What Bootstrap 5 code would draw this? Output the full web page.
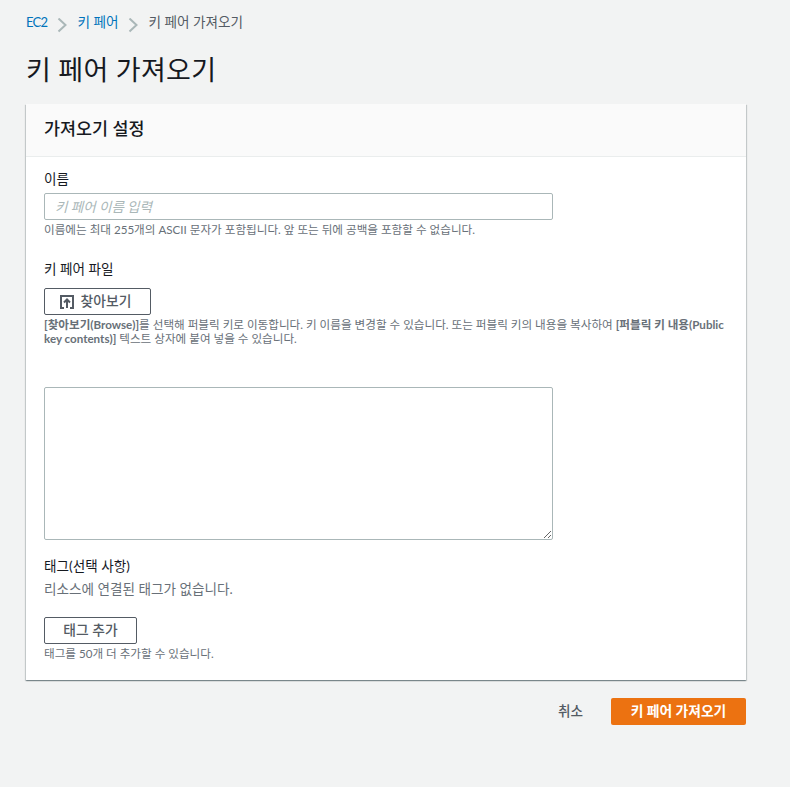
<!DOCTYPE html>
<html lang="ko">

<head>
    <meta charset="UTF-8">
    <meta name="viewport" content="width=device-width, initial-scale=1.0">
    <title>키 페어 가져오기</title>
    <link href="https://cdn.jsdelivr.net/npm/bootstrap@5.3.0/dist/css/bootstrap.min.css" rel="stylesheet">
    <style>
        body {
            background-color: #f2f3f3;
            font-family: "Lato", "Noto Sans CJK KR", sans-serif;
            font-size: 13.6px;
            color: #16191f;
            padding: 12px 44px 0 26px;
        }

        .crumbs {
            height: 21px;
            line-height: 21px;
            font-size: 13.6px;
            color: #545b64;
        }

        .crumbs a {
            color: #0073bb;
            text-decoration: none;
        }

        .crumbs .crumb-latin {
            font-size: 13px;
            letter-spacing: -.7px;
        }

        .crumbs svg {
            margin: 6px 10px 0 10px;
        }

        .page-head {
            font-size: 27px;
            font-weight: 400;
            line-height: 36px;
            letter-spacing: .3px;
            margin: 19px 0 16px;
        }

        .import-card {
            border: 0;
            border-radius: 0;
            background: #fff;
            box-shadow: 0 1px 1px 0 rgba(0, 28, 36, .3), 1px 1px 1px 0 rgba(0, 28, 36, .15), -1px 1px 1px 0 rgba(0, 28, 36, .15);
        }

        .import-card .card-header {
            height: 53px;
            padding: 0 18px;
            line-height: 50px;
            background: #fafafa;
            border-bottom: 1px solid #eaeded;
            border-radius: 0;
            font-size: 17.4px;
            font-weight: 500;
        }

        .import-card .card-body {
            padding: 12px 18px 19px;
        }

        .field-label {
            font-size: 13.6px;
            line-height: 20px;
            margin: 0 0 4px;
        }

        .field-box {
            display: block;
            width: 509px;
            border: 1px solid #aab7b8;
            border-radius: 2px;
            background: #fff;
            padding: 0 10px;
            font-size: 13.6px;
            color: #16191f;
        }

        input.field-box {
            height: 27px;
        }

        input.field-box::placeholder {
            color: #aab7b8;
            font-style: italic;
            opacity: 1;
        }

        textarea.field-box {
            height: 153px;
            resize: both;
            margin-top: 41px;
        }

        .hint {
            font-size: 11.6px;
            line-height: 14px;
            color: #687078;
        }

        .hint b {
            font-weight: 700;
        }

        .btn-line {
            display: flex;
            align-items: center;
            justify-content: center;
            height: 27px;
            padding: 0;
            border: 1px solid #545b64;
            border-radius: 2px;
            background: #fff;
            color: #545b64;
            font-size: 13.8px;
            font-weight: 500;
        }

        .btn-browse {
            width: 107px;
            gap: 7px;
            padding-right: 4px;
        }

        .btn-tag {
            width: 93px;
        }

        .muted-line {
            font-size: 13.6px;
            line-height: 20px;
            color: #687078;
            margin-top: 3px;
        }

        .btn-cancel {
            color: #545b64;
            font-size: 13.6px;
            font-weight: 500;
            padding: 0;
            border: 0;
            margin-right: 28px;
        }

        .btn-orange {
            width: 135px;
            height: 27px;
            padding: 0;
            border: 0;
            border-radius: 2px;
            background: #ec7211;
            color: #fff;
            font-size: 13.8px;
            font-weight: 700;
        }

        .gap-file {
            margin-top: 22px;
        }

        .gap-browse {
            margin-top: 9px;
        }

        .gap-tags {
            margin-top: 16px;
        }

        .gap-tag-btn {
            margin-top: 18px;
        }

        .hint-tight {
            margin-top: 3px;
        }

        .page-foot {
            margin-top: 18px;
        }
    </style>
</head>

<body>
    <nav class="crumbs d-flex align-items-start">
        <a class="crumb-latin" href="#">EC2</a>
        <svg width="10" height="15" viewBox="0 0 10 15" fill="none" stroke="#aab7b8" stroke-width="2"><path d="M1.5 .5 8.5 7 1.5 13.5"/></svg>
        <a href="#">키 페어</a>
        <svg width="10" height="15" viewBox="0 0 10 15" fill="none" stroke="#aab7b8" stroke-width="2"><path d="M1.5 .5 8.5 7 1.5 13.5"/></svg>
        <span>키 페어 가져오기</span>
    </nav>

    <h1 class="page-head">키 페어 가져오기</h1>

    <div class="card import-card">
        <div class="card-header">가져오기 설정</div>
        <div class="card-body">
            <label class="field-label d-block" for="keyName">이름</label>
            <input id="keyName" class="field-box" type="text" placeholder="키 페어 이름 입력">
            <div class="hint hint-tight">이름에는 최대 255개의 ASCII 문자가 포함됩니다. 앞 또는 뒤에 공백을 포함할 수 없습니다.</div>

            <div class="field-label gap-file">키 페어 파일</div>
            <button class="btn-line btn-browse gap-browse" type="button">
                <svg width="14" height="14" viewBox="0 0 14 14" fill="none" stroke="#545b64" stroke-width="2"><path d="M4 13H1V1h12v12h-3"/><path d="M7 13V5M4 7.5l3-3 3 3"/></svg>
                찾아보기
            </button>
            <div class="hint hint-tight"><b>[찾아보기(Browse)]</b>를 선택해 퍼블릭 키로 이동합니다. 키 이름을 변경할 수 있습니다. 또는 퍼블릭 키의 내용을 복사하여 <b>[퍼블릭 키 내용(Public key contents)]</b> 텍스트 상자에 붙여 넣을 수 있습니다.</div>
            <textarea class="field-box" aria-label="퍼블릭 키 내용"></textarea>

            <div class="field-label gap-tags mb-0">태그(선택 사항)</div>
            <div class="muted-line">리소스에 연결된 태그가 없습니다.</div>
            <button class="btn-line btn-tag gap-tag-btn" type="button">태그 추가</button>
            <div class="hint hint-tight">태그를 50개 더 추가할 수 있습니다.</div>
        </div>
    </div>

    <div class="page-foot d-flex justify-content-end align-items-center">
        <button class="btn btn-cancel" type="button">취소</button>
        <button class="btn btn-orange" type="button">키 페어 가져오기</button>
    </div>

    <script src="https://cdn.jsdelivr.net/npm/bootstrap@5.3.0/dist/js/bootstrap.bundle.min.js"></script>
</body>

</html>
